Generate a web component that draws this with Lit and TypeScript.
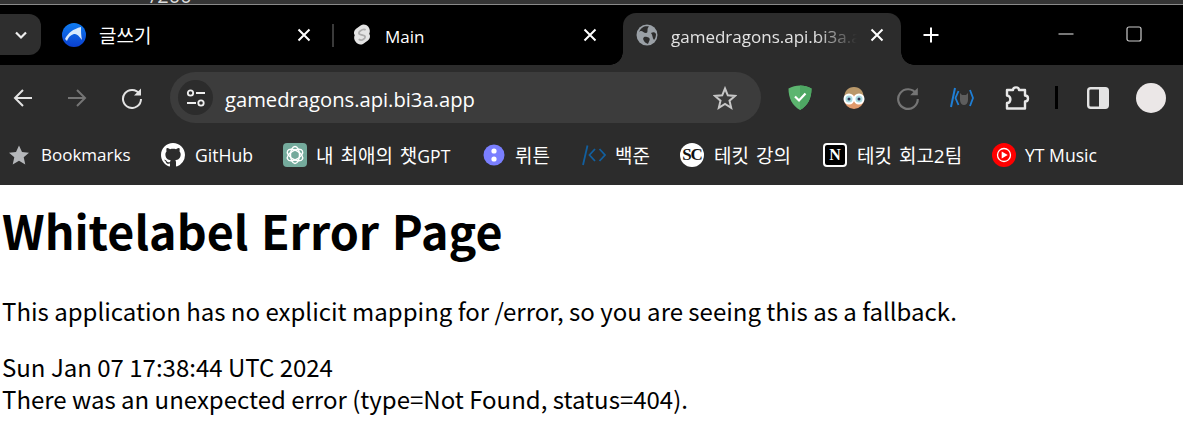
import { LitElement, html, css } from "lit";
import { customElement } from "lit/decorators.js";

const ic = {
  chevron: html`<svg class="i" width="16" height="16" viewBox="0 0 16 16"><path d="M3 5.500 8 10.500 13 5.500" fill="none" stroke="#eee" stroke-width="2.200"/></svg>`,
  close: html`<svg class="i" width="14" height="14" viewBox="0 0 14 14"><path d="M1.500 1.500 12.500 12.500M12.500 1.500 1.500 12.500" stroke="#fff" stroke-width="2"/></svg>`,
  whale: html`<svg class="i" width="24" height="24" viewBox="0 0 24 24"><defs><linearGradient id="wh" x1="0" y1="0" x2="0" y2="1"><stop offset="0" stop-color="#0f7cf0"/><stop offset="1" stop-color="#0a3fd0"/></linearGradient></defs><circle cx="12" cy="12" r="12" fill="url(#wh)"/><path d="M3 16C6 10 11 6 19 4 19 9 19 12 20 17 17 13 15 11 13 11 10 11 7 13 5 18Z" fill="#d8e9fc"/></svg>`,
  svelte: html`<svg class="i" width="20" height="24" viewBox="0 0 22 24"><path d="M18 3C15.500 0 12 0 9.500 1.500L4.500 5C2 6.800 1.500 10 3 12.400 1.800 14.600 2.300 17.300 4 19.500 6.500 23 10 23 12.500 21.500L17.500 18C20 16.200 20.500 13 19 10.600 20.200 8.400 19.700 5.500 18 3Z" fill="#e4e4e4"/><path d="M15 6.500C13 5 11.500 5.800 9 7.500 7 9 7 11 9.500 11.500L12.500 12.500C15 13 15 15 13 16.500 11 18 9 18 7.500 16.500" fill="none" stroke="#adadad" stroke-width="2"/></svg>`,
  globe: html`<svg class="i" width="22" height="22" viewBox="0 0 22 22"><circle cx="11" cy="11" r="10.500" fill="#9aa0a6"/><path d="M3 8C6 5 7 9 10 9 13 9 10 5 13 2.500 9 1.500 5 3 3 8ZM11 13C8 12 6 14 8 17 9 19 11 19 12 20 13 17 15 15 12.500 13.500ZM15 9C17 8 19 8 20 10 20 13 19 15 18 16 16 14 17 11 15 9Z" fill="#2c2c2c"/></svg>`,
  plus: html`<svg class="i" width="16" height="16" viewBox="0 0 16 16"><path d="M8 0.500V15.500M0.500 8H15.500" stroke="#fff" stroke-width="2"/></svg>`,
  min: html`<svg class="i" width="16" height="2" viewBox="0 0 16 2"><path d="M0.500 1H15.500" stroke="#eee" stroke-width="1"/></svg>`,
  max: html`<svg class="i" width="16" height="16" viewBox="0 0 16 16"><rect x="1" y="1" width="14" height="14" rx="2" fill="none" stroke="#ccc" stroke-width="1.200"/></svg>`,
  back: html`<svg class="i" width="20" height="20" viewBox="0 0 20 20"><path d="M19 10H2M10 2 2 10 10 18" fill="none" stroke="#e3e3e3" stroke-width="2"/></svg>`,
  fwd: html`<svg class="i" width="20" height="20" viewBox="0 0 20 20"><path d="M1 10H18M10 2 18 10 10 18" fill="none" stroke="#757575" stroke-width="2"/></svg>`,
  reload: (c: string, s: number) => html`<svg class="i" width=${s} height=${s} viewBox="0 0 22 22"><path d="M18.500 7A9 9 0 1 0 20 12" fill="none" stroke=${c} stroke-width="2"/><path d="M20 1.500V8.500H13Z" fill=${c}/></svg>`,
  tune: html`<svg class="i" width="20" height="20" viewBox="0 0 20 20"><circle cx="4.500" cy="5" r="2.700" fill="none" stroke="#eee" stroke-width="1.800"/><path d="M10 5H19M1 15H10" stroke="#eee" stroke-width="1.800"/><circle cx="15" cy="15" r="2.700" fill="none" stroke="#eee" stroke-width="1.800"/></svg>`,
  star: html`<svg class="i" width="24" height="24" viewBox="0 0 24 24"><path d="M12 2.500 14.800 9.300 22 9.900 16.500 14.700 18.200 21.800 12 18 5.800 21.800 7.500 14.700 2 9.900 9.200 9.300Z" fill="none" stroke="#c7c7c7" stroke-width="2"/></svg>`,
  shield: html`<svg class="i" width="24" height="25" viewBox="0 0 24 25"><path d="M12 0.500C8 0.500 4 1.500 0.500 3.500 0.500 13 4 20.500 12 25 20 20.500 23.500 13 23.500 3.500 20 1.500 16 0.500 12 0.500Z" fill="#5cb56f"/><path d="M12 0.500C16 0.500 20 1.500 23.500 3.500 23.500 13 20 20.500 12 25Z" fill="#4ea763"/><path d="M7 11.500 11 15.500 17.500 8.500" fill="none" stroke="#fff" stroke-width="2.200"/></svg>`,
  avatar: html`<svg class="i" width="24" height="24" viewBox="0 0 24 24"><circle cx="12" cy="13" r="10" fill="#e09a6c"/><path d="M2.500 12C2 5 6 1 12 1 18 1 22 5 21.500 12 17 8 7 8 2.500 12Z" fill="#b9986a"/><circle cx="7" cy="13" r="4.500" fill="#a9dbe0" stroke="#fff" stroke-width="2"/><circle cx="17" cy="13" r="4.500" fill="#a9dbe0" stroke="#fff" stroke-width="2"/><circle cx="7" cy="13" r="1.500" fill="#335"/><circle cx="17" cy="13" r="1.500" fill="#335"/></svg>`,
  boj: html`<svg class="i" width="24" height="22" viewBox="0 0 24 22"><path d="M5 1 1 20" stroke="#1f7fd6" stroke-width="2" fill="none"/><path d="M8.500 4 5.500 11 8.500 18M20 3 23 11 20 19" stroke="#1f7fd6" stroke-width="1.800" fill="none"/><path d="M10 6 12 8H16L18 6V13C18 16 16 18 14 18 12 18 10 16 10 13Z" fill="#5d5d5d"/></svg>`,
  puzzle: html`<svg class="i" width="26" height="26" viewBox="0 0 26 26"><path d="M3 5H9C9 1.500 15 1.500 15 5H21V10.500C25 10.500 25 16.500 21 16.500V23.500H3V18C7.500 18 7.500 10.500 3 10.500Z" fill="none" stroke="#e8e8e8" stroke-width="2.400" stroke-linejoin="round"/></svg>`,
  side: html`<svg class="i" width="22" height="22" viewBox="0 0 22 22"><rect x="1.200" y="1.200" width="19.600" height="19.600" rx="2.500" fill="none" stroke="#e3e3e3" stroke-width="2.400"/><rect x="12" y="1.200" width="8.800" height="19.600" fill="#e3e3e3"/></svg>`,
  bstar: html`<svg class="i" width="20" height="20" viewBox="0 0 20 20"><path d="M10 0.500 13 7 20 7.700 14.700 12.300 16.300 19.500 10 15.800 3.700 19.500 5.300 12.300 0 7.700 7 7Z" fill="#b5b7ba"/></svg>`,
  github: html`<svg class="i" width="24" height="24" viewBox="0 0 16 16"><path fill="#fff" d="M8 0C3.58 0 0 3.58 0 8c0 3.54 2.29 6.53 5.47 7.59.4.07.55-.17.55-.38 0-.19-.01-.82-.01-1.49-2.01.37-2.53-.49-2.69-.94-.09-.23-.48-.94-.82-1.13-.28-.15-.68-.52-.01-.53.63-.01 1.08.58 1.23.82.72 1.21 1.87.87 2.33.66.07-.52.28-.87.51-1.07-1.78-.2-3.64-.89-3.64-3.95 0-.87.31-1.59.82-2.15-.08-.2-.36-1.02.08-2.12 0 0 .67-.21 2.2.82.64-.18 1.32-.27 2-.27.68 0 1.36.09 2 .27 1.53-1.04 2.2-.82 2.2-.82.44 1.1.16 1.92.08 2.12.51.56.82 1.27.82 2.15 0 3.07-1.87 3.75-3.65 3.95.29.25.54.73.54 1.48 0 1.07-.01 1.93-.01 2.2 0 .21.15.46.55.38A8.013 8.013 0 0016 8c0-4.42-3.58-8-8-8z"/></svg>`,
  gpt: html`<svg class="i" width="24" height="24" viewBox="0 0 24 24"><rect width="24" height="24" rx="4" fill="#74aa9c"/><g fill="none" stroke="#fff" stroke-width="1.400"><ellipse cx="12" cy="12" rx="4.500" ry="8.500"/><ellipse cx="12" cy="12" rx="4.500" ry="8.500" transform="rotate(60 12 12)"/><ellipse cx="12" cy="12" rx="4.500" ry="8.500" transform="rotate(120 12 12)"/></g></svg>`,
  wrtn: html`<svg class="i" width="24" height="24" viewBox="0 0 24 24"><circle cx="12" cy="12" r="10.500" fill="#7a7fff"/><circle cx="12" cy="8" r="2.600" fill="#fff"/><circle cx="12" cy="16" r="2.600" fill="#fff"/></svg>`,
  bojb: html`<svg class="i" width="24" height="24" viewBox="0 0 24 24"><path d="M5.500 2.500 1 22" stroke="#125f9e" stroke-width="1.800" fill="none"/><path d="M13 6 7.500 12 13 18M17.500 6 23 12 17.500 18" stroke="#125f9e" stroke-width="1.800" fill="none"/></svg>`,
  yt: html`<svg class="i" width="24" height="24" viewBox="0 0 24 24"><circle cx="12" cy="12" r="12" fill="#f00"/><circle cx="12" cy="12" r="6.500" fill="none" stroke="#fff" stroke-width="1.300"/><path d="M9.700 8.500 15.700 12 9.700 15.500Z" fill="#fff"/></svg>`,
};

const sc = html`<span class="sc">SC</span>`;
const notion = html`<span class="notion">N</span>`;
const ko = (t: string) => html`<span class="ko">${t}</span>`;
const lat = (t: string) => html`<span class="lat">${t}</span>`;

const bookmarks = [
  { icon: ic.bstar, label: html`Bookmarks`, w: 152, gap: 12 },
  { icon: ic.github, label: lat("GitHub"), w: 122, gap: 10 },
  { icon: ic.gpt, label: html`${ko("내 최애의 챗")}${lat("GPT")}`, w: 199, gap: 9 },
  { icon: ic.wrtn, label: ko("뤼튼"), w: 100, gap: 9 },
  { icon: ic.bojb, label: ko("백준"), w: 98, gap: 9 },
  { icon: sc, label: ko("테킷 강의"), w: 143, gap: 10 },
  { icon: notion, label: ko("테킷 회고2팀"), w: 169, gap: 10 },
  { icon: ic.yt, label: lat("YT Music"), w: 140, gap: 9 },
];

@customElement("app-root")
export class AppRoot extends LitElement {
  static styles = css`
    :host { display: block; width: 1183px; height: 441px; overflow: hidden; background: #fff;
      font-family: "Open Sans", "Noto Sans CJK KR", sans-serif; }
    .i { display: block; flex: none; }
    .clip { height: 4px; background: #343434; border-bottom: 1px solid #8a8a8a; overflow: hidden; padding-left: 150px;
      color: #ddd; font-size: 20px; line-height: 0; }
    .clip span { display: block; margin-top: -4px; }
    .tabs { height: 60px; background: #000; display: flex; align-items: flex-start; color: #fff; }
    .chev { width: 41px; height: 41px; margin-top: 9px; background: #2e2e2e; border-radius: 0 12px 12px 0;
      display: flex; align-items: center; justify-content: center; flex: none; }
    .tab { height: 52px; margin-top: 8px; display: flex; align-items: center; position: relative; flex: none;
      font-size: 17px; box-sizing: border-box; padding-bottom: 8px; }
    .tab .title { flex: 1; min-width: 0; white-space: nowrap; overflow: hidden; padding-top: 2px; }
    .tab > .i { margin-right: 13px; }
    .t1 { width: 270px; margin-left: 21px; }
    .t1 .title { font-size: 19px; padding-top: 0; }
    .t1 .x { margin-right: 21px; }
    .sep { width: 2px; height: 23px; background: #3a3a3a; margin: 19px 0 0 0; flex: none; }
    .t2 { width: 289px; padding-left: 18px; }
    .t2 .x { margin-right: 26px; }
    .t3 { width: 278px; padding-left: 13px; background: #2c2c2c; border-radius: 13px 13px 0 0; color: #e3e3e3; }
    .t3 .x { margin-right: 17px; margin-left: 13px; }
    .t3::before, .t3::after { content: ""; position: absolute; bottom: 0; width: 13px; height: 13px; }
    .t3::before { left: -13px; background: radial-gradient(circle at 0 0, #000 12.500px, #2c2c2c 13px); }
    .t3::after { right: -13px; background: radial-gradient(circle at 100% 0, #000 12.500px, #2c2c2c 13px); }
    .t3 .title { -webkit-mask-image: linear-gradient(90deg, #000 78%, transparent 100%); mask-image: linear-gradient(90deg, #000 78%, transparent 100%); }
    .plus { margin: 22px 0 0 22px; }
    .win { margin-left: auto; display: flex; align-items: center; gap: 52px; margin-top: 21px; margin-right: 41px; }
    .bar { height: 65px; background: #2c2c2c; display: flex; align-items: center; box-sizing: border-box; padding-left: 13px; }
    .nav { width: 54px; flex: none; }
    .nav.r { width: 49px; }
    .omni { width: 591px; height: 51px; flex: none; background: #3c3c3c; border-radius: 26px; display: flex; align-items: center;
      box-sizing: border-box; padding: 0 24px 0 8px; color: #fff; font-size: 20.200px; }
    .chip { width: 35px; height: 35px; border-radius: 50%; background: #2c2c2c; display: flex; align-items: center; justify-content: center; flex: none; margin-right: 12px; }
    .url { flex: 1; white-space: nowrap; padding-top: 2px; }
    .tools { display: flex; align-items: center; flex: none; margin-left: 27px; }
    .tools > * { flex: none; }
    .m1 { margin-right: 30px; } .m2 { margin-right: 30px; } .m3 { margin-right: 30px; } .m4 { margin-right: 30px; }
    .m5 { margin-right: 25px; }
    .vsep { width: 3px; height: 23px; background: #000; margin-right: 29px; }
    .m6 { margin-right: 27px; }
    .me { width: 30px; height: 30px; border-radius: 50%; background: #ebe7e7; }
    .marks { height: 55px; background: #2c2c2c; display: flex; align-items: center; padding: 0 0 6px 9px; box-sizing: border-box; color: #fff; font-size: 17px; }
    .mark { display: flex; align-items: center; flex: none; white-space: nowrap; }
    .l { display: block; }
    .ko { font-size: 19px; word-spacing: 2px; }
    .lat { font-size: 17.600px; }
    .sc { width: 24px; height: 24px; border-radius: 50%; background: #fff; color: #111; display: flex; align-items: center; justify-content: center;
      font: 700 17px "Liberation Serif", serif; letter-spacing: -1px; flex: none; }
    .notion { width: 24px; height: 24px; box-sizing: border-box; border: 2px solid #fff; border-radius: 4px; background: #000; color: #fff;
      display: flex; align-items: center; justify-content: center; font: 700 16px "Liberation Serif", serif; flex: none; }
    main { padding: 0 2px; color: #000; font-family: "Noto Sans CJK KR", "Noto Sans", sans-serif; }
    h1 { margin: 0; font-size: 46.600px; font-weight: 700; line-height: 60px; padding-top: 15px; word-spacing: 2px; }
    p { margin: 0; font-size: 24px; line-height: 32px; }
    .p1 { margin-top: 35px; margin-bottom: 24px; }
  `;

  render() {
    return html`
      <div class="clip"><span>/200</span></div>
      <div class="tabs">
        <div class="chev">${ic.chevron}</div>
        <div class="tab t1">${ic.whale}<span class="title">글쓰기</span><span class="x">${ic.close}</span></div>
        <div class="sep"></div>
        <div class="tab t2">${ic.svelte}<span class="title">Main</span><span class="x">${ic.close}</span></div>
        <div class="tab t3">${ic.globe}<span class="title">gamedragons.api.bi3a.app</span><span class="x">${ic.close}</span></div>
        <div class="plus">${ic.plus}</div>
        <div class="win">${ic.min}${ic.max}</div>
      </div>
      <div class="bar">
        <div class="nav">${ic.back}</div>
        <div class="nav">${ic.fwd}</div>
        <div class="nav r">${ic.reload("#e3e3e3", 22)}</div>
        <div class="omni">
          <div class="chip">${ic.tune}</div>
          <div class="url">gamedragons.api.bi3a.app</div>
          ${ic.star}
        </div>
        <div class="tools">
          <div class="m1">${ic.shield}</div>
          <div class="m2">${ic.avatar}</div>
          <div class="m3">${ic.reload("#757575", 24)}</div>
          <div class="m4">${ic.boj}</div>
          <div class="m5">${ic.puzzle}</div>
          <div class="vsep"></div>
          <div class="m6">${ic.side}</div>
          <div class="me"></div>
        </div>
      </div>
      <div class="marks">
        ${bookmarks.map(
          (b) => html`<div class="mark" style="width:${b.w}px;gap:${b.gap}px">${b.icon}<span class="l">${b.label}</span></div>`
        )}
      </div>
      <main>
        <h1>Whitelabel Error Page</h1>
        <p class="p1">This application has no explicit mapping for /error, so you are seeing this as a fallback.</p>
        <p>Sun Jan 07 17:38:44 UTC 2024</p>
        <p>There was an unexpected error (type=Not Found, status=404).</p>
      </main>
    `;
  }
}
